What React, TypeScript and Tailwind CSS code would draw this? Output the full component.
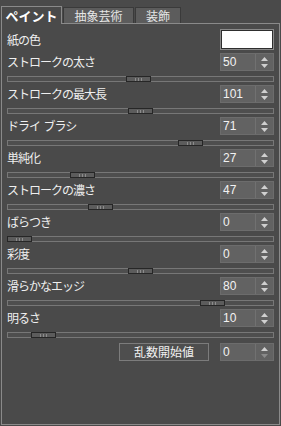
// Paint filter panel - dark options dialog

const params = [
  { label: 'ストロークの太さ', value: '50', thumb: 119 },
  { label: 'ストロークの最大長', value: '101', thumb: 121 },
  { label: 'ドライ  ブラシ', value: '71', thumb: 171 },
  { label: '単純化', value: '27', thumb: 63 },
  { label: 'ストロークの濃さ', value: '47', thumb: 81 },
  { label: 'ばらつき', value: '0', thumb: 0 },
  { label: '彩度', value: '0', thumb: 121 },
  { label: '滑らかなエッジ', value: '80', thumb: 193 },
  { label: '明るさ', value: '10', thumb: 24 },
];

function Arrows({ downDisabled = false }: { downDisabled?: boolean }) {
  return (
    <svg width="7" height="11" viewBox="0 0 7 11">
      <path d="M3.5 0 L7 4 L0 4 Z" fill="#d0d0d0" />
      <path d="M0 7 L7 7 L3.5 11 Z" fill={downDisabled ? '#8a8a8a' : '#d0d0d0'} />
    </svg>
  );
}

function SpinBox({ value, downDisabled = false }: { value: string; downDisabled?: boolean }) {
  return (
    <div className="flex w-[54px] h-[18px] border border-[#6c6c6c] bg-[#626262]">
      <div className="flex-1 flex items-center pl-[2px] text-[12px] text-[#f2f2f2] font-['Liberation_Sans',sans-serif]">
        {value}
      </div>
      <div className="w-[18px] flex items-center justify-center border-l border-[#717171]">
        <Arrows downDisabled={downDisabled} />
      </div>
    </div>
  );
}

function Slider({ thumb }: { thumb: number }) {
  return (
    <div className="relative h-[6px] mt-[5px] border border-[#777777] bg-[#4e4e4e]">
      <div
        className="absolute top-[-1px] w-[25px] h-[6px] border border-[#262626] bg-[#5c5c5c] flex items-center justify-center gap-[2px]"
        style={{ left: thumb - 1 }}
      >
        <span className="w-px h-[3px] bg-[#8c8c8c]" />
        <span className="w-px h-[3px] bg-[#8c8c8c]" />
        <span className="w-px h-[3px] bg-[#8c8c8c]" />
      </div>
    </div>
  );
}

export default function App() {
  return (
    <div className="w-[281px] h-[426px] bg-[#4a4a4a] flex flex-col font-['Noto_Sans_CJK_JP',sans-serif] text-[#efefef]">
      {/* Tabs */}
      <div className="flex items-end h-[23px] pl-[1px]">
        <div className="relative z-10 w-[61px] h-[18px] -mb-px border border-b-0 border-[#8a8a8a] bg-[#4a4a4a] flex items-center justify-center text-[13px] font-bold text-white">
          ペイント
        </div>
        <div className="w-[71px] h-[16px] ml-px border border-b-0 border-[#3a3a3a] bg-[#5c5c5c] flex items-center justify-center text-[12px] text-[#e6e6e6]">
          抽象芸術
        </div>
        <div className="w-[46px] h-[16px] ml-px border border-b-0 border-[#3a3a3a] bg-[#5c5c5c] flex items-center justify-center text-[12px] text-[#e6e6e6]">
          装飾
        </div>
      </div>

      {/* Panel */}
      <div className="flex-1 mx-px mb-px border border-[#8a8a8a] px-[5px] pt-[5px] flex flex-col">
        <div className="flex items-center justify-between h-[21px]">
          <span className="text-[12px] tracking-[-1px]">紙の色</span>
          <div className="w-[54px] h-[21px] border border-[#8a8a8a] p-px bg-[#2e2e2e]">
            <div className="w-full h-full bg-white" />
          </div>
        </div>

        {params.map((p) => (
          <div key={p.label} className="mt-[3px]">
            <div className="flex items-center justify-between h-[18px]">
              <span className="text-[12px] tracking-[-1px] whitespace-pre">{p.label}</span>
              <SpinBox value={p.value} />
            </div>
            <Slider thumb={p.thumb} />
          </div>
        ))}

        <div className="flex justify-end items-center gap-[11px] mt-[5px]">
          <button className="w-[90px] h-[18px] border border-[#7c7c7c] bg-[#4e4e4e] text-[12px] text-[#f2f2f2] flex items-center justify-center">
            乱数開始値
          </button>
          <SpinBox value="0" downDisabled />
        </div>
      </div>
    </div>
  );
}
